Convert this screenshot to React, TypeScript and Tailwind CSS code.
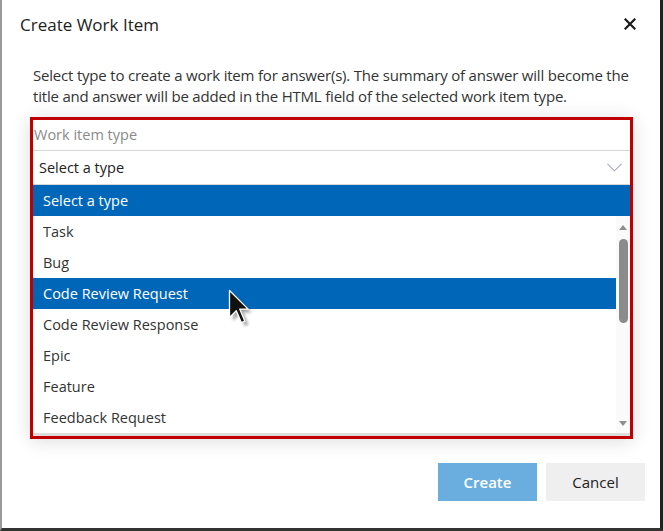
import { useState } from "react";

const types = [
  "Task",
  "Bug",
  "Code Review Request",
  "Code Review Response",
  "Epic",
  "Feature",
  "Feedback Request",
];

const CloseIcon = () => (
  <svg width="12" height="12" viewBox="0 0 12 12" className="block">
    <path d="M1.5 1.5 L10.5 10.5 M10.5 1.5 L1.5 10.5" stroke="#1a1a1a" strokeWidth="2.2" strokeLinecap="square" />
  </svg>
);

const Chevron = () => (
  <svg width="15" height="9" viewBox="0 0 15 9" className="block">
    <path d="M0.5 0.8 L7.5 7.8 L14.5 0.8" fill="none" stroke="#a3aab8" strokeWidth="1.1" />
  </svg>
);

const Cursor = () => (
  <svg width="26" height="38" viewBox="0 0 26 38" className="block">
    <defs>
      <filter id="cs" x="-30%" y="-30%" width="160%" height="160%">
        <feGaussianBlur stdDeviation="1.4" />
      </filter>
    </defs>
    <path
      d="M3 3 L3 30 L9.8 23.3 L14.9 35.2 L18.3 33.5 L13.2 21.6 L21.7 21.6 Z"
      fill="#000"
      opacity="0.35"
      filter="url(#cs)"
      transform="translate(2 2)"
    />
    <path
      d="M1.5 1.5 L1.5 28.5 L8.3 21.8 L13.4 33.7 L16.8 32 L11.7 20.1 L20.2 20.1 Z"
      fill="#111"
      stroke="#fff"
      strokeWidth="1.3"
      strokeLinejoin="round"
    />
  </svg>
);

export default function App() {
  const [hovered] = useState("Code Review Request");

  return (
    <div
      className="relative w-[663px] h-[531px] bg-white flex flex-col border-l-[2px] border-l-[#9a9a9a] border-r-[3px] border-r-[#222] border-b-[3px] border-b-[#333] overflow-hidden text-[#333]"
      style={{ fontFamily: '"Segoe UI", "Open Sans", sans-serif' }}
    >
      {/* header */}
      <div className="flex items-center justify-between pl-[18px] pr-[20px] h-[48px]">
        <div className="text-[17px] text-[#222] leading-none">Create Work Item</div>
        <button className="w-[20px] h-[20px] flex items-center justify-center">
          <CloseIcon />
        </button>
      </div>

      {/* body */}
      <div className="pl-[28px] pr-[27px] pt-[17px]">
        <p className="text-[15px] leading-[21px] text-[#333] pl-[3px] -mr-[4px] tracking-[-0.2px]">
          Select type to create a work item for answer(s). The summary of answer will become the
          title and answer will be added in the HTML field of the selected work item type.
        </p>

        <div className="mt-[10px] border-[3px] border-[#c00000] shadow-[0_2px_18px_rgba(0,0,0,0.14)] bg-white">
          <div className="h-[30px] flex items-center pl-[1px] text-[14.5px] text-[#8a8a8a]">Work item type</div>
          <div className="h-[35px] border-t border-b border-[#d6d6d6] flex items-center justify-between pl-[6px] pr-[8px] text-[14.5px] text-[#222]">
            <span>Select a type</span>
            <Chevron />
          </div>
          <div className="flex flex-col border-b-[3px] border-[#dcdcdc]">
            <div className="h-[31px] flex items-center pl-[10px] bg-[#0067b8] text-white text-[14.5px]">Select a type</div>
            <div className="flex">
              <div className="flex-1 flex flex-col">
                {types.map((t) => (
                  <div
                    key={t}
                    className={
                      t === hovered
                        ? "h-[31px] flex items-center pl-[10px] text-[14.5px] bg-[#0067b8] text-white"
                        : "h-[31px] flex items-center pl-[10px] text-[14.5px] text-[#333]"
                    }
                  >
                    {t}
                  </div>
                ))}
              </div>
              <div className="w-[14px] bg-[#fafafa] flex flex-col items-center pt-[9px] pb-[7px]">
                <div className="w-0 h-0 border-l-[4px] border-r-[4px] border-b-[5px] border-l-transparent border-r-transparent border-b-[#8f8f8f]" />
                <div className="mt-[9px] w-[9px] h-[84px] rounded-full bg-[#8b8b8b]" />
                <div className="flex-1" />
                <div className="w-0 h-0 border-l-[4px] border-r-[4px] border-t-[5px] border-l-transparent border-r-transparent border-t-[#8f8f8f]" />
              </div>
            </div>
          </div>
        </div>
      </div>

      {/* footer */}
      <div className="flex justify-end gap-[9px] pr-[15px] mt-[24px]">
        <button className="w-[99px] h-[38px] bg-[#6aaee0] text-white text-[15px] font-semibold">Create</button>
        <button className="w-[99px] h-[38px] bg-[#efefef] text-[#222] text-[15px]">Cancel</button>
      </div>

      <div className="absolute left-[226px] top-[289px] pointer-events-none">
        <Cursor />
      </div>
    </div>
  );
}
